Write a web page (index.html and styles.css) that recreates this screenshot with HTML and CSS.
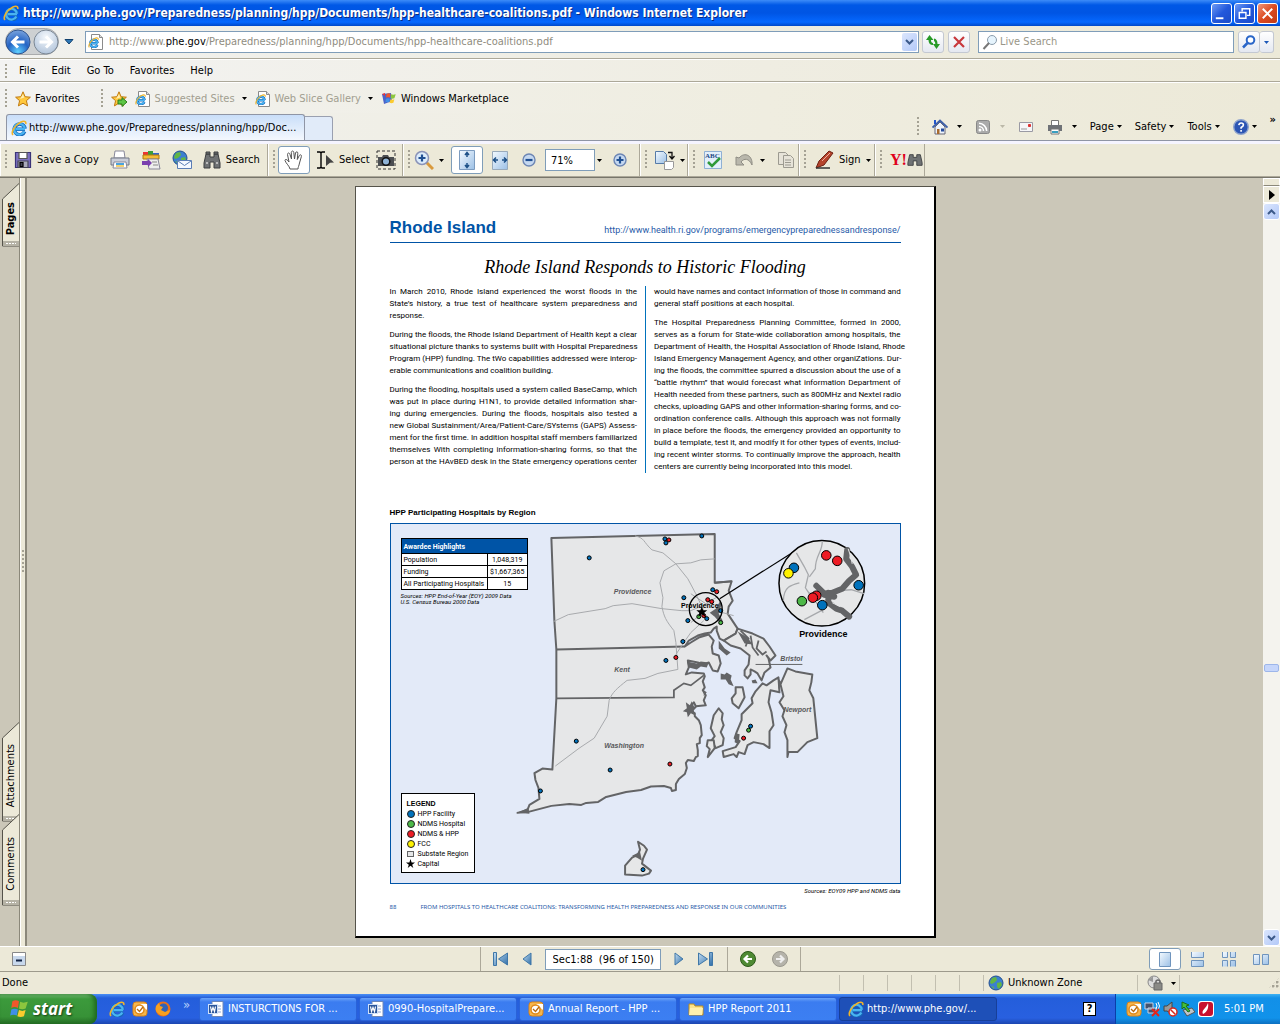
FILE: index.html
```
<!DOCTYPE html>
<html lang="en">
<head>
  <meta charset="UTF-8">
  <title>http://www.phe.gov/Preparedness/planning/hpp/Documents/hpp-healthcare-coalitions.pdf - Windows Internet Explorer</title>
  <link rel="stylesheet" href="styles.css">
</head>
<body>
  <!-- shared icons -->
  <svg class="defs" width="0" height="0" aria-hidden="true">
    <defs>
      <linearGradient id="blueGrad" x1="0" y1="0" x2="1" y2="1"><stop offset="0" stop-color="#f4faff"/><stop offset="1" stop-color="#9cc0e6"/></linearGradient>
      <linearGradient id="arrowGrad" x1="0" y1="0" x2="1" y2="1"><stop offset="0" stop-color="#c5def2"/><stop offset="1" stop-color="#2e6ea8"/></linearGradient>
      <radialGradient id="backGrad" cx=".5" cy=".9" r=".9"><stop offset="0" stop-color="#5fd0ff"/><stop offset=".5" stop-color="#2463c4"/><stop offset="1" stop-color="#7ba4dd"/></radialGradient>
      <radialGradient id="fwdGrad" cx=".5" cy=".3" r=".8"><stop offset="0" stop-color="#f4f8fc"/><stop offset="1" stop-color="#a9bdd6"/></radialGradient>
      <symbol id="ie" viewBox="0 0 16 16">
        <path d="M14 9.200H4.500M13.600 11.500A5.400 5.400 0 1 1 14 8.800" fill="none" stroke="#1668b8" stroke-width="3.600"/>
        <path d="M14 9.200H4.500M13.300 11.500A5.400 5.400 0 1 1 13.800 8.800" fill="none" stroke="#49b4f2" stroke-width="2.200"/>
        <path d="M2 15C-.5 12.500 4 5 9.500 2.200c3.500-1.700 6-1 5.200 1.800" fill="none" stroke="#f0b429" stroke-width="1.600"/>
      </symbol>
      <symbol id="iepage" viewBox="0 0 16 16">
        <path d="M3.500.5h8l3 3v12h-11z" fill="#fff" stroke="#8b8b8b"/><path d="M11.500.5v3h3" fill="#ddd" stroke="#8b8b8b"/>
        <use href="#ie" x="0" y="3" width="11" height="11"/>
      </symbol>
      <symbol id="star" viewBox="0 0 16 16"><path d="M8 .8l2.100 4.900 5.300.5-4 3.500 1.200 5.200L8 12.200l-4.600 2.700 1.200-5.200-4-3.500 5.300-.5z" fill="#ffc83d" stroke="#c07a10"/><path d="M8 3l1.300 3.600L5 8z" fill="#ffeeb0"/></symbol>
      <symbol id="down" viewBox="0 0 5 3"><path d="M0 0h5L2.500 3z"/></symbol>
      <symbol id="printer" viewBox="0 0 20 20">
        <path d="M5 1h9l1 7H4z" fill="#fff" stroke="#889"/><path d="M1 8h18v7H1z" fill="#c9cdd8" stroke="#737886"/>
        <path d="M4 12h12l1 6H3z" fill="#fff" stroke="#889"/><path d="M6 14h8" stroke="#4aa3df" stroke-width="2"/><path d="M6 16h8" stroke="#f0c040" stroke-width="1.500"/>
      </symbol>
      <symbol id="globe" viewBox="0 0 16 16"><circle cx="8" cy="8" r="7" fill="#3c7fd0" stroke="#234f8f"/><path d="M4 3l4-1 1 3-3 3-3 1-1-2zM9 8l4-1 1 3-3 4-2-2zM3 11l3 1v2z" fill="#62b545"/></symbol>
      <symbol id="outlook" viewBox="0 0 16 16"><rect x="1" y="1" width="14" height="14" rx="3" fill="#f6b64c" stroke="#d98218"/><path d="M8 3h7v6z" fill="#fff"/><circle cx="7.500" cy="8.500" r="4.500" fill="#fff" stroke="#e08a1c" stroke-width="1.500"/><path d="M5 8l2.500 2.500L11 6" fill="none" stroke="#b86a10" stroke-width="1.300"/></symbol>
      <symbol id="word" viewBox="0 0 16 16"><path d="M4 .5h11v15H4z" fill="#fff" stroke="#6d87b8"/><path d="M9 5h4M9 8h4M9 11h4" stroke="#8ba6d6"/><rect x=".5" y="3.500" width="9" height="9" fill="#2b569a" stroke="#cfe0f8"/><path d="M2.500 5.500l1 5 1.500-4 1.500 4 1-5" fill="none" stroke="#fff" stroke-width="1.200"/></symbol>
      <symbol id="flag" viewBox="0 0 20 20"><path d="M4 3c3-1.500 4-1 6 0L9 9C7 8 5 8 3 9z" fill="#f0572b"/><path d="M11 3.500c2 1 4 1 7 0L16 9.500c-2 1-4 1-6 0z" fill="#8cc63e"/><path d="M3 10.500c2-1.200 4-1 6 0L8 16c-2-1-4-1-6 0z" fill="#3f8fe8"/><path d="M10 11c2 1 4 1 6 0l-1.500 5.500c-2 1-4 1-6 0z" fill="#fbcb2e"/></symbol>
    </defs>
  </svg>

  <header class="titlebar">
    <svg class="i16"><use href="#ie"/></svg>
    <h1>http://www.phe.gov/Preparedness/planning/hpp/Documents/hpp-healthcare-coalitions.pdf - Windows Internet Explorer</h1>
    <div class="winbtns">
      <button aria-label="Minimize"><svg viewBox="0 0 20 20"><path d="M4 14h8v2H4z" fill="#fff"/></svg></button>
      <button aria-label="Restore"><svg viewBox="0 0 20 20" fill="none" stroke="#fff"><path d="M7.500 8V5h8v7h-3" stroke-width="1.500"/><path d="M4.500 9h7v6h-7z" stroke-width="1.500"/></svg></button>
      <button class="close" aria-label="Close"><svg viewBox="0 0 20 20"><path d="M5 5l10 10M15 5L5 15" stroke="#fff" stroke-width="2"/></svg></button>
    </div>
  </header>

  <div class="navrow">
    <button class="backfwd" aria-label="Back and forward">
      <svg viewBox="0 0 54 28"><rect x=".5" y=".5" width="53" height="26" rx="13" fill="#cdd0d2" stroke="#a9abad"/>
        <circle cx="13" cy="14" r="12" fill="url(#backGrad)" stroke="#31558f"/><path d="M19.500 14H8M13 8.500L7.500 14l5.500 5.500" fill="none" stroke="#fff" stroke-width="3"/>
        <circle cx="41" cy="14" r="12" fill="url(#fwdGrad)" stroke="#7b8794"/><path d="M34.500 14H46M41 8.500l5.500 5.500-5.500 5.500" fill="none" stroke="#fff" stroke-width="3"/></svg>
    </button>
    <button class="recent" aria-label="Recent pages"><svg width="10" height="6" viewBox="0 0 10 6"><path d="M1 .5h8L5 5z" fill="#2d78b8" stroke="#12416e"/></svg></button>
    <div class="address">
      <svg class="i16"><use href="#iepage"/></svg>
      <div class="url" role="textbox" aria-label="Address">http://www.<b>phe.gov</b>/Preparedness/planning/hpp/Documents/hpp-healthcare-coalitions.pdf</div>
      <button class="drop" aria-label="Show addresses"><svg width="9" height="6" viewBox="0 0 9 6"><path d="M1 1l3.500 3.500L8 1" fill="none" stroke="#3c5a8a" stroke-width="2"/></svg></button>
    </div>
    <button class="small" aria-label="Refresh"><svg class="i16" viewBox="0 0 16 16" fill="#279a27"><path d="M4.500 1L1 6h2.500q0 5 4.500 5V9Q6 9 6 6h2.500zM11.500 15L15 10h-2.500q0-5-3.500-5.500V7q1.300.5 1.300 3H8z"/></svg></button>
    <button class="small" aria-label="Stop"><svg class="i16" viewBox="0 0 16 16"><path d="M3 3l10 10M13 3L3 13" stroke="#c8383c" stroke-width="2.200"/></svg></button>
    <label class="search">
      <svg class="i16" viewBox="0 0 16 16"><circle cx="10" cy="6" r="4.500" fill="#e6f4fd" stroke="#8a9cab"/><path d="M7 9l-5.500 6" stroke="#777" stroke-width="2"/></svg>
      <input type="text" placeholder="Live Search" aria-label="Live Search">
    </label>
    <div class="go">
      <button aria-label="Search"><svg class="i16" viewBox="0 0 16 16"><circle cx="9.500" cy="6" r="3.800" fill="#fff" stroke="#2a66c8" stroke-width="2"/><path d="M6.500 9L2 13.500" stroke="#2a66c8" stroke-width="2.500"/></svg></button>
      <button class="godrop" aria-label="Search options"><svg width="5" height="3" fill="#1a57b8"><use href="#down"/></svg></button>
    </div>
  </div>

  <nav class="menubar">
    <i class="dots"></i>
    <button>File</button><button>Edit</button><button>Go To</button><button>Favorites</button><button>Help</button>
  </nav>

  <div class="favbar">
    <i class="dots"></i>
    <button class="favmain"><svg class="i16"><use href="#star"/></svg>Favorites</button>
    <i class="dots"></i>
    <button class="addfav" aria-label="Add to Favorites Bar"><svg class="i16" viewBox="0 0 16 16"><use href="#star"/><path d="M7 9h4V6.500l5 4.500-5 4.500V13H7z" fill="#5cc544" stroke="#2b7d1c"/></svg></button>
    <button class="dim"><svg class="i16"><use href="#iepage"/></svg>Suggested Sites<svg class="tri"><use href="#down"/></svg></button>
    <button class="dim"><svg class="i16"><use href="#iepage"/></svg>Web Slice Gallery<svg class="tri"><use href="#down"/></svg></button>
    <button><svg class="i16" viewBox="0 0 16 16"><path d="M1 3l9-1 1 8-8 3z" fill="#4b62c8"/><use href="#flag" x="3" y="1" width="13" height="13"/><path d="M1 3l3-1v3z" fill="#e33"/></svg>Windows Marketplace</button>
  </div>

  <div class="tabrow">
    <button class="tab"><svg class="i16"><use href="#ie"/></svg>http://www.phe.gov/Preparedness/planning/hpp/Doc...</button>
    <button class="newtab" aria-label="New Tab"></button>
    <div class="cmdbar">
      <i class="dots"></i>
      <button aria-label="Home"><svg class="i16" viewBox="0 0 16 16"><path d="M3 8v7h10V8L8 3z" fill="#eef3fa" stroke="#667"/><path d="M.5 8.500L8 1.500l7.500 7" fill="none" stroke="#3c5fa8" stroke-width="1.800"/><path d="M2 1h2v4H2z" fill="#25c"/><path d="M5 10h2.500v5H5z" fill="#a86a2c"/><path d="M9 9.500h3v3H9z" fill="#234a9c"/></svg><svg class="tri"><use href="#down"/></svg></button>
      <button class="dim" aria-label="Feeds"><svg class="i16" viewBox="0 0 16 16"><rect x="1.500" y="1.500" width="13" height="13" rx="2" fill="#aaa" stroke="#888"/><circle cx="5" cy="11" r="1.500" fill="#fff"/><path d="M4 7.500A4.500 4.500 0 0 1 8.500 12M4 4.300A8 8 0 0 1 11.700 12" fill="none" stroke="#fff" stroke-width="1.500"/></svg><svg class="tri pale"><use href="#down"/></svg></button>
      <button aria-label="Read Mail"><svg class="i16" viewBox="0 0 16 16"><path d="M1.500 3.500h13v9h-13z" fill="#f6f6f8" stroke="#9a9aa4"/><path d="M10.500 5.500h2v2h-2z" fill="#d33" stroke="#d33"/><path d="M3 10h6" stroke="#999"/></svg></button>
      <button aria-label="Print"><svg class="i16" viewBox="0 0 16 16"><path d="M4.500 1.500h7V7h-7z" fill="#fff" stroke="#777"/><path d="M1 6h14v6H1z" fill="#6f7277"/><path d="M4 10h8v5H4z" fill="#fff" stroke="#777"/><path d="M5 13h6" stroke="#3a9fc0" stroke-width="2"/></svg><svg class="tri"><use href="#down"/></svg></button>
      <button class="word">Page<svg class="tri"><use href="#down"/></svg></button>
      <button class="word">Safety<svg class="tri"><use href="#down"/></svg></button>
      <button class="word">Tools<svg class="tri"><use href="#down"/></svg></button>
      <button class="helpbtn" aria-label="Help"><svg class="i16" viewBox="0 0 16 16"><circle cx="8" cy="8" r="7.300" fill="#2c55b4" stroke="#8ea3cc" stroke-width="1.400"/><path d="M5.800 6.200q.3-2.200 2.300-2.200 2.300 0 2.300 2 0 1.200-2.300 2.500v1.200M8.100 11v1.700" fill="none" stroke="#fff" stroke-width="1.600"/></svg><svg class="tri"><use href="#down"/></svg></button>
      <button class="more" aria-label="More commands">»</button>
    </div>
  </div>

  <div class="pdfbar">
    <div class="group g-file">
      <i class="dots"></i>
      <button class="lead"><svg class="i18" viewBox="0 0 18 18"><path d="M1.500 1.500h15v15h-15z" fill="#7c70c0" stroke="#3b3478"/><path d="M5 1.500h8v6H5z" fill="#fff" stroke="#555"/><path d="M4 10h10v6.500H4z" fill="#aab" stroke="#445"/><path d="M6 11.500h3v4H6z" fill="#445"/></svg>Save a Copy</button>
      <button aria-label="Print"><svg class="i20"><use href="#printer"/></svg></button>
      <button aria-label="Organizer"><svg class="i20" viewBox="0 0 20 20"><path d="M2 2h5v3H2z" fill="#e33"/><path d="M7 1h5v4H7z" fill="#3a9d3a"/><path d="M12 3h6v3h-6z" fill="#36c"/><path d="M2 5h16v4H2z" fill="#f5bb35" stroke="#b27a10"/><path d="M6 9h11l2 10H8z" fill="#eee" stroke="#889"/><path d="M1 11h6V9l4 4-4 4v-2H1z" fill="#7a3fae"/><path d="M11 12h5M12 15h5" stroke="#888"/></svg></button>
      <button aria-label="Email"><svg class="i20" viewBox="0 0 20 20"><use href="#globe" width="16" height="16"/><path d="M5.500 10.500h14v8h-14z" fill="#f4f8ff" stroke="#5a7db5"/><path d="M6 11l6.500 4.500L19 11" fill="none" stroke="#5a7db5"/></svg></button>
      <button><svg class="i18" viewBox="0 0 18 18" fill="#6f7274" stroke="#3c3e40"><path d="M3 3h4v3h4V3h4l2 9v5h-6v-6H7v6H1v-5z"/><path d="M3 1h4v2H3zM11 1h4v2h-4z"/><path d="M3 12h2M13 12h2" stroke="#bbb" stroke-width="2"/></svg>Search</button>
    </div>
    <div class="group g-tools">
      <i class="dots"></i>
      <button class="on" aria-label="Hand tool"><svg class="i20" viewBox="0 0 20 20"><path d="M6 19c-.5-3-4-5.500-5-8.500 0-1.700 2-1.500 4 1.500L3.500 4.500c0-2 2-2 2.500 0L7.500 9 7.300 2.500c.2-2 2.400-2 2.500 0L10.500 9l1-6c.5-1.800 2.500-1.500 2.300.3L13.300 9.500l2-4c1-1.500 2.500-.5 2.100 1L15.500 13c-.5 3-1.500 4-1.500 6z" fill="#fff" stroke="#555"/></svg></button>
      <button><svg class="i18" viewBox="0 0 18 18"><path d="M1 1h3l1 1 1-1h3M5 2v14M1 17h3l1-1 1 1h3" fill="none" stroke="#000" stroke-width="1.400"/><path d="M10 4l8 7.500-4 .3L10 15z" fill="#444"/></svg>Select</button>
      <button class="cam" aria-label="Snapshot"><svg class="i20" viewBox="0 0 20 20"><path d="M1 1h18v18H1z" fill="none" stroke="#333" stroke-dasharray="3 2"/><path d="M2 7h4l1-2h5l1 2h5v9H2z" fill="#4b4e52"/><circle cx="10" cy="11.500" r="3.800" fill="#8fb3d6" stroke="#111" stroke-width="1.500"/></svg></button>
    </div>
    <div class="group g-zoom">
      <i class="dots"></i>
      <button aria-label="Zoom In tool"><svg class="i20" viewBox="0 0 20 20"><path d="M12 12l7 7" stroke="#d99a3c" stroke-width="3"/><circle cx="8" cy="8" r="6.500" fill="#dcecfb" stroke="#8a93b8" stroke-width="1.500"/><path d="M8 4.500v7M4.500 8h7" stroke="#1f4f92" stroke-width="2.200"/></svg><svg class="tri"><use href="#down"/></svg></button>
      <button class="on" aria-label="Fit page"><svg class="i20" viewBox="0 0 20 20"><path d="M2.500.5h15v19h-15z" fill="url(#blueGrad)" stroke="#7d9cc0"/><path d="M10 3v4M10 17v-4M8 5l2-2.500L12 5M8 15l2 2.500 2-2.500" fill="none" stroke="#1c4f86" stroke-width="1.500"/></svg></button>
      <button aria-label="Fit width"><svg class="i20" viewBox="0 0 20 20"><path d="M2.500 1.500h15v18h-15z" fill="url(#blueGrad)" stroke="#9ab"/><path d="M3 10h5M17 10h-5M6 7.500L3.500 10 6 12.500M14 7.500l2.500 2.500-2.500 2.500" fill="none" stroke="#1c4f86" stroke-width="1.500"/></svg></button>
      <button class="minus" aria-label="Zoom Out"><svg class="i14" viewBox="0 0 14 14"><circle cx="7" cy="7" r="6" fill="#c5d8f0" stroke="#6d86b4" stroke-width="1.400"/><path d="M3.500 7h7" stroke="#1f4f92" stroke-width="2.200"/></svg></button>
      <span class="zoomval"><input type="text" value="71%" aria-label="Zoom"><svg class="tri"><use href="#down"/></svg></span>
      <button aria-label="Zoom In"><svg class="i14" viewBox="0 0 14 14"><circle cx="7" cy="7" r="6" fill="#c5d8f0" stroke="#6d86b4" stroke-width="1.400"/><path d="M3.500 7h7M7 3.500v7" stroke="#1f4f92" stroke-width="2.200"/></svg></button>
    </div>
    <div class="group g-rot">
      <i class="dots"></i>
      <button aria-label="Rotate pages"><svg class="i20" viewBox="0 0 20 20"><path d="M.5 1.500h8l3 3v9H.5z" fill="url(#blueGrad)" stroke="#567ba8"/><path d="M9.500 11.500h9v6l-2 2h-7z" fill="#fff" stroke="#999"/><path d="M13 2.500h4V8M14.500 6l2.500 3 2.500-3" fill="none" stroke="#111" stroke-width="1.300"/></svg><svg class="tri"><use href="#down"/></svg></button>
    </div>
    <div class="group g-edit">
      <i class="dots"></i>
      <button aria-label="Spell check"><svg class="i20" viewBox="0 0 20 20"><path d="M1.500 1.500h17v17h-17z" fill="#e3effa" stroke="#8fb0d4"/><text x="2" y="8" class="abc">ABC</text><path d="M5 12l4 4 8-8" fill="none" stroke="#2f9a3a" stroke-width="2.500"/></svg></button>
      <button aria-label="Undo"><svg class="i20" viewBox="0 0 20 20"><path d="M1 7v8h8l-3-3c3-4 8-4 11 3 1-9-7-14-13-7z" fill="#b9b7ac" stroke="#8f8d84"/></svg><svg class="tri"><use href="#down"/></svg></button>
      <button aria-label="Copy"><svg class="i18" viewBox="0 0 18 18" fill="#e6e3d8" stroke="#9c9a90"><path d="M1.500 1.500h7l3 3v9h-10z"/><path d="M6.500 4.500h7l3 3v9h-10z"/><path d="M8 9h6M8 11.500h6M8 14h6"/></svg></button>
    </div>
    <div class="group g-sign">
      <i class="dots"></i>
      <button><svg class="i20" viewBox="0 0 20 20"><path d="M2 18L5 11 15 1l4 2-9 12z" fill="#b5442c" stroke="#6d2012"/><path d="M2 18h14" stroke="#333" stroke-width="1.500"/><path d="M8 11l8-8" stroke="#f0b0a0"/></svg>Sign<svg class="tri"><use href="#down"/></svg></button>
    </div>
    <div class="group g-yahoo">
      <i class="dots"></i>
      <button aria-label="Yahoo search"><span class="yahoo">Y!</span><svg class="i16" viewBox="0 0 18 18" fill="#6f7274" stroke="#3c3e40"><path d="M3 3h4v3h4V3h4l2 9v3h-6v-5H7v5H1v-3z"/></svg></button>
    </div>
  </div>

  <main class="viewer">
    <div class="sidetabs">
      <button class="active"><svg viewBox="0 0 17 64" preserveAspectRatio="none"><path d="M17 .5L.5 16v47H17" fill="#ece9d8" stroke="#55534a"/><path d="M1 58h16v5H1z" fill="#b5b2a5"/><path d="M4 60.500h10" stroke="#fff" stroke-dasharray="2 1"/></svg><span>Pages</span></button>
      <div class="spacer"></div>
      <button class="long"><svg viewBox="0 0 17 100" preserveAspectRatio="none"><path d="M17 .5L.5 16v83H17" fill="#ece9d8" stroke="#55534a"/><path d="M1 94h16v5H1z" fill="#b5b2a5"/><path d="M4 96.500h10" stroke="#fff" stroke-dasharray="2 1"/></svg><span>Attachments</span></button>
      <button class="mid"><svg viewBox="0 0 17 92" preserveAspectRatio="none"><path d="M17 .5L.5 16v75H17" fill="#ece9d8" stroke="#55534a"/><path d="M1 86h16v5H1z" fill="#b5b2a5"/><path d="M4 88.500h10" stroke="#fff" stroke-dasharray="2 1"/></svg><span>Comments</span></button>
    </div>
    <div class="splitter"><i class="dots"></i></div>

    <div class="canvas">
      <article class="sheet">
        <div class="sheethead">
          <h2>Rhode Island</h2>
          <a href="http://www.health.ri.gov/programs/emergencypreparednessandresponse/">http://www.health.ri.gov/programs/emergencypreparednessandresponse/</a>
        </div>
        <h3 class="script">Rhode Island Responds to Historic Flooding</h3>
        <div class="columns">
          <div class="col">
            <p><span>In March 2010, Rhode Island experienced the worst floods in the</span> <span>State’s history, a true test of healthcare system preparedness and</span> <span>response.</span></p>
            <p><span>During the floods, the Rhode Island Department of Health kept a clear</span> <span>situational picture thanks to systems built with Hospital Preparedness</span> <span>Program (HPP) funding. The tWo capabilities addressed were interop-</span> <span>erable communications and coalition building.</span></p>
            <p class="full"><span>During the flooding, hospitals used a system called BaseCamp, which</span> <span>was put in place during H1N1, to provide detailed information shar-</span> <span>ing during emergencies. During the floods, hospitals also tested a</span> <span>new Global Sustainment/Area/Patient-Care/SYstems (GAPS) Assess-</span> <span>ment for the first time. In addition hospital staff members familiarized</span> <span>themselves With completing information-sharing forms, so that the</span> <span>person at the HAvBED desk in the State emergency operations center</span></p>
          </div>
          <div class="col">
            <p><span>would have names and contact information of those in command and</span> <span>general staff positions at each hospital.</span></p>
            <p><span>The Hospital Preparedness Planning Committee, formed in 2000,</span> <span>serves as a forum for State-wide collaboration among hospitals, the</span> <span>Department of Health, the Hospital Association of Rhode Island, Rhode</span> <span>Island Emergency Management Agency, and other organiZations. Dur-</span> <span>ing the floods, the committee spurred a discussion about the use of a</span> <span>“battle rhythm” that would forecast what information Department of</span> <span>Health needed from these partners, such as 800MHz and Nextel radio</span> <span>checks, uploading GAPS and other information-sharing forms, and co-</span> <span>ordination conference calls. Although this approach was not formally</span> <span>in place before the floods, the emergency provided an opportunity to</span> <span>build a template, test it, and modify it for other types of events, includ-</span> <span>ing recent winter storms. To continually improve the approach, health</span> <span>centers are currently being incorporated into this model.</span></p>
          </div>
        </div>

        <h4>HPP Participating Hospitals by Region</h4>
        <div class="map">
          <svg class="mapart" viewBox="389 523 511 360">
            <g class="land">
              <path d="M550 537L714 533V582L731 580.500 728 590 732 600 728 606 727 613 737 628 735 633 723 640 719 638 716 630 716 626 713 628 710 632 704 633 697 635 688 640 684 646 690 642 698 637 708 634 713 640 711 646 712 653 718 655 720 663 717 671 712 670 708 662 703 664 697 662 687 660 688 667 685 674 691 672 703 673 704 676 702 681 704 687 702 690 705 695 703 700 705 705 695 706 693 702 688 709 694 713 694 716 698 720 700 725 701 735 699 738 699 743 696 744 697 750 697 756 695 757 693 761 687 760 685 763 686 768 684 774 678 779 675 784 675 790 671 791 670 788 663 786 650 786.500 640 790 625 792 605 797 597 802 585 803 580 805 568 804 550 806 527 812 516 813 526 810 528 805 538 799 537 788 534 780 533 773 541 768.500 551 769.500 555 698 555 649 553 620Z"/>
              <path d="M737 628L752 633 763 638 769 646 775 655 770 660 766 655 768 658 770 667 764 672 761 680 757 673 754 671 750 669 750 674 747 678 744 675 744 670 748 664 749 655 740 648 730 645 723 640 735 633Z"/>
              <path d="M735 687L742 687 744 697 738 708 732 703 731 698 735 693Z"/>
              <path d="M718 708L722 713 721 719 723 725 720 732 723 738 722 745 715 748 711 740 714 736 710 728 713 715Z"/>
              <path d="M707 740L713 740 714 748 707 757 709 749 706 746Z"/>
              <path d="M778 677L779 692 770 690 768 702 771 712 773 725 769 731 769 748 763 744 753 742 747 745 744 754 738 752 736 757 733 754 723 757 722 751 735 747 739 741 734 738 736 732 741 720 741 714 752 703 751 698 755 691 762 683 766 685 773 680Z"/>
              <path d="M787 668L795 671 812 674 811 682 809 690 813 698 817 738 807 742 797 752 788 752 787 757V740L784 732 786 725 782 716 784 710 779 702 783 696 780 684Z"/>
              <path d="M637 842L643 846 646 850 642 859 641 864 650 871 648 874 641 876 624 875 624 866 631 858 637 855 639 850Z"/>
            </g>
            <g class="borders">
              <path d="M555 649L684 646M555 698L673 697V690L683 683 690 685 703 675M714 582L731 580.500"/>
              <path d="M740 630l8 8-3 8M750 635l2 12 6 8M758 640l-2 8 6 6 4-3" />
            </g>
            <path class="hair" d="M755 664H802"/>
            <path class="shore" d="M686 661l10 2 4-2 8 1-2 5-6-1-4 3-8-2zM718 640l6 8 6 4-4 3-8-7zM737 631l10 6 5 7-8-1zM720 673l4 1 2-2 5 3-1 4 3 7-5-2-3-5-5 0zM685 702l4 3 2-4 2 5 3 1-3 3 1 5-4-2-3 4-1-5-4-1 4-3zM735 733l4 1-1 10-4-2zM778 678l3 4-3 7zM751 680l4-1 2 4-5 0zM703 690l3 2-3 4zM631 856l8-4 2 9-5-3zM516 813l11-5 1 6z"/>
            <g class="roads">
              <path d="M552 621l15-7 37-6 8-3 19-2 30 5 20 2h9l19-8M722 612l11 3M634 535c10 2 8 6 17 14l11 3 13 11 12 15 8 15 8 17M675 563l15-1 10-3 14-1M675 563l-12 7-4 12 3 15-1 9c2 10 4 14 12 24l2 12 2 27-20 4-13 5-18 2c-10 8-15 12-18 20l-2 16-13 22-15 10-24 18M703 620l-13 12-7 10-8 12M690 593l15 10 12-7M690 622l12-10"/>
            </g>
            <path class="shore" d="M709 612l6-4 4-7 2 2-3 10 4 7-3 2-5-6z"/>
            <g class="dots8">
              <circle cx="588" cy="557" r="2"/><circle cx="664" cy="538" r="2"/><circle cx="665" cy="542" r="2"/><circle cx="701" cy="535" r="2"/><circle cx="683" cy="597" r="2"/><circle cx="712" cy="589" r="2"/><circle cx="687" cy="620" r="2"/><circle cx="720" cy="610" r="2"/><circle cx="682" cy="641" r="2"/><circle cx="665" cy="660" r="2"/><circle cx="706" cy="618" r="2"/><circle cx="750" cy="726" r="2"/><circle cx="575" cy="741" r="2"/><circle cx="609" cy="770" r="2"/><circle cx="539" cy="791" r="2"/><circle cx="642" cy="870" r="2"/>
            </g>
            <g class="dots8 red"><circle cx="668" cy="539" r="2"/><circle cx="716" cy="591" r="2"/><circle cx="707" cy="599" r="2"/><circle cx="711" cy="601" r="2"/><circle cx="703" cy="615" r="2"/><circle cx="675" cy="657" r="2"/><circle cx="743" cy="738" r="2"/><circle cx="669" cy="764" r="2"/></g>
            <g class="dots8 green"><circle cx="698" cy="616" r="2"/><circle cx="720" cy="622" r="2"/><circle cx="748" cy="730" r="2"/></g>
            <path d="M701 606l1.500 3.500h4l-3 2.500 1 4-3.500-2.500-3.500 2.500 1-4-3-2.500h4z"/>
            <circle class="ring" cx="705" cy="608.500" r="16.500"/>
            <path class="lead" d="M719 598L793 551"/>
            <circle class="lens" cx="821.500" cy="582.500" r="43"/>
            <g class="roads big"><path d="M796 552l8 14 4 8-3 13 4 6 12-2 30-2 13 4M822 540c0 12-7 14-7 28l-6 8M783 600c0-14 8-16 16-18M804 619l17-9M809 592l14 20"/></g>
            <path class="river" d="M847 549l-1 9 6 8 4 8-7 6-7 8-10 4-8 1-8-8M824 594l10 2M828 592v10l8 6 6 2 7 6"/>
            <path class="hair2" d="M848 548l3 9 1 6M832 602l8 4"/>
            <g class="bigdots">
              <g class="blue"><circle cx="793.500" cy="567" r="4.800"/><circle cx="858.500" cy="584.500" r="4.800"/><circle cx="822" cy="604.500" r="4.800"/></g>
              <g class="red"><circle cx="826" cy="554.500" r="4.800"/><circle cx="837" cy="560" r="4.800"/><circle cx="816" cy="595" r="4.800"/><circle cx="812.500" cy="597" r="4.800"/></g>
              <circle class="yellow" cx="788" cy="572.500" r="4.800"/><circle class="green" cx="801.500" cy="600.500" r="4.800"/>
            </g>
            <g class="region"><text x="631.500" y="593">Providence</text><text x="621" y="672">Kent</text><text x="623" y="748">Washington</text><text x="791" y="661">Bristol</text><text x="797" y="712">Newport</text></g>
            <g class="city"><text class="tiny" x="699" y="607">Providence</text><text x="823" y="636">Providence</text></g>
          </svg>

          <div class="awardee">
            <table>
              <thead><tr><th colspan="2">Awardee Highlights</th></tr></thead>
              <tbody>
                <tr><td>Population</td><td class="num">1,048,319</td></tr>
                <tr><td>Funding</td><td class="num">$1,667,365</td></tr>
                <tr><td>All Participating Hospitals</td><td class="num">15</td></tr>
              </tbody>
            </table>
            <p class="src">Sources: HPP End-of-Year (EOY) 2009 Data<br>U.S. Census Bureau 2000 Data</p>
          </div>

          <div class="legend">
            <h5>LEGEND</h5>
            <ul>
              <li><i class="pin blue"></i>HPP Facility</li>
              <li><i class="pin green"></i>NDMS Hospital</li>
              <li><i class="pin red"></i>NDMS &amp; HPP</li>
              <li><i class="pin yellow"></i>FCC</li>
              <li><i class="pin box"></i>Substate Region</li>
              <li><svg width="9" height="9" viewBox="0 0 16 16"><path d="M8 0l2 6h6l-5 4 2 6-5-4-5 4 2-6-5-4h6z"/></svg>Capital</li>
            </ul>
          </div>
        </div>
        <p class="mapsrc">Sources: EOY09 HPP and NDMS data</p>
        <footer class="sheetfoot"><span>88</span><span>FROM HOSPITALS TO HEALTHCARE COALITIONS: TRANSFORMING HEALTH PREPAREDNESS AND RESPONSE IN OUR COMMUNITIES</span></footer>
      </article>
    </div>

    <div class="scroll">
      <i class="splitbox"></i>
      <button class="play" aria-label="Document options"><svg width="6" height="10" viewBox="0 0 6 10"><path d="M0 0l6 5-6 5z"/></svg></button>
      <button aria-label="Scroll up"><svg width="9" height="6" viewBox="0 0 9 6"><path d="M1 5l3.500-3.500L8 5" fill="none" stroke="#3c5a8a" stroke-width="2"/></svg></button>
      <div class="track"><i class="thumb"></i></div>
      <button aria-label="Scroll down"><svg width="9" height="6" viewBox="0 0 9 6"><path d="M1 1l3.500 3.500L8 1" fill="none" stroke="#3c5a8a" stroke-width="2"/></svg></button>
    </div>
  </main>

  <div class="pagebar">
    <button class="hide" aria-label="Hide toolbars"><svg class="i14" viewBox="0 0 14 14"><path d="M.5.5h13v13H.5z" fill="#fff" stroke="#888"/><path d="M1 4h12v9H1z" fill="#c8d8ec"/><path d="M4 8.500h6" stroke="#124" stroke-width="2"/></svg></button>
    <div class="pager">
      <div class="steps">
        <button aria-label="First page"><svg width="16" height="14" viewBox="0 0 16 14" fill="url(#arrowGrad)" stroke="#3f77a8"><path d="M.5.5h3v13h-3zM14.500 1v12l-9-6z"/></svg></button>
        <button aria-label="Previous page"><svg width="10" height="14" viewBox="0 0 10 14"><path d="M9 1v12L1 7z" fill="url(#arrowGrad)" stroke="#3f77a8"/></svg></button>
        <input type="text" value="Sec1:88  (96 of 150)" aria-label="Page">
        <button aria-label="Next page"><svg width="10" height="14" viewBox="0 0 10 14"><path d="M1 1v12l8-6z" fill="url(#arrowGrad)" stroke="#3f77a8"/></svg></button>
        <button aria-label="Last page"><svg width="16" height="14" viewBox="0 0 16 14" fill="url(#arrowGrad)" stroke="#3f77a8"><path d="M12.500.5h3v13h-3zM1.500 1v12l9-6z"/></svg></button>
      </div>
      <div class="views">
        <button aria-label="Previous view"><svg class="i16" viewBox="0 0 16 16"><circle cx="8" cy="8" r="7.500" fill="#4f8a33" stroke="#2c5a1a"/><path d="M12 8H5M8 4.500L4.500 8 8 11.500" fill="none" stroke="#fff" stroke-width="2.200"/></svg></button>
        <button aria-label="Next view"><svg class="i16" viewBox="0 0 16 16"><circle cx="8" cy="8" r="7.500" fill="#b5b3aa" stroke="#9a988e"/><path d="M4 8h7M8 4.500l3.500 3.500L8 11.500" fill="none" stroke="#eee" stroke-width="2.200"/></svg></button>
      </div>
    </div>
    <div class="layouts">
      <button class="on" aria-label="Single page"><svg class="i16" viewBox="0 0 16 16"><path d="M2.500 1.500h11v14h-11z" fill="url(#blueGrad)" stroke="#6f94bd"/></svg></button>
      <button aria-label="Continuous"><svg class="i16" viewBox="0 0 16 16" fill="url(#blueGrad)" stroke="#6f94bd"><path d="M2.500 1v5.500h12V1M2.500 15.500v-6h12v6z"/></svg></button>
      <button aria-label="Continuous facing"><svg class="i16" viewBox="0 0 16 16" fill="url(#blueGrad)" stroke="#6f94bd"><path d="M1.500 1v5.500h5V1M9.500 1v5.500h5V1M1.500 15.500v-6h5v6M9.500 15.500v-6h5v6"/></svg></button>
      <button aria-label="Facing"><svg class="i16" viewBox="0 0 16 16" fill="url(#blueGrad)" stroke="#6f94bd"><path d="M.5 3.500h6v10h-6zM9.500 3.500h6v10h-6z"/></svg></button>
    </div>
  </div>

  <div class="statusbar">
    <span class="done">Done</span>
    <i class="cell"></i><i class="cell"></i><i class="cell"></i><i class="cell"></i><i class="cell"></i><i class="cell"></i>
    <span class="zone"><svg class="i16"><use href="#globe"/></svg>Unknown Zone</span>
    <span class="lock"><svg class="i16" viewBox="0 0 16 16"><circle cx="7" cy="7" r="6" fill="#ddd" stroke="#888"/><path d="M1 5l5 2V1" fill="#999"/><path d="M7 8h8v7H7z" fill="#8a8a86" stroke="#666"/><path d="M9 8V6q2-2 4 0v2" fill="none" stroke="#666" stroke-width="1.500"/></svg><svg class="tri"><use href="#down"/></svg></span>
    <span class="grip"></span>
  </div>

  <footer class="taskbar">
    <button class="start"><svg viewBox="0 0 20 20"><use href="#flag"/></svg>start</button>
    <div class="quick">
      <svg class="i16"><use href="#ie"/></svg>
      <svg class="i16"><use href="#outlook"/></svg>
      <svg class="i16" viewBox="0 0 16 16"><circle cx="8" cy="8" r="7.500" fill="#e8701a"/><circle cx="8.500" cy="7" r="4.500" fill="#2f62b8"/><path d="M1 5l3-3 1 3 3 1-2 3 4 2 5-2c-1 6-7 7-11 4S.5 8 1 5z" fill="#f7a01f"/></svg>
      <button class="chev" aria-label="More">»</button>
    </div>
    <div class="tasks">
      <button><svg class="i16"><use href="#word"/></svg>INSTURCTIONS FOR ...</button>
      <button><svg class="i16"><use href="#word"/></svg>0990-HospitalPrepare...</button>
      <button><svg class="i16"><use href="#outlook"/></svg>Annual Report - HPP ...</button>
      <button><svg class="i16" viewBox="0 0 16 16"><path d="M1 3h5l1 2h8v9H1z" fill="#fbe38a" stroke="#b98a1e"/><path d="M2 7h13l-1 7H1z" fill="#fff0ad"/></svg>HPP Report 2011</button>
      <button class="current"><svg class="i16"><use href="#ie"/></svg>http://www.phe.gov/...</button>
    </div>
    <button class="ask" aria-label="Language bar help">?</button>
    <div class="tray">
      <svg class="i16"><use href="#outlook"/></svg>
      <svg class="i16" viewBox="0 0 16 16"><path d="M1 2h8v6H1zM4 7h8v5H4z" fill="#44536e" stroke="#c6d2e6"/><path d="M12 2q2 3 0 6M14 1q3 4 0 8" fill="none" stroke="#fff"/><path d="M8 8l7 7M15 8l-7 7" stroke="#e3241b" stroke-width="2"/></svg>
      <svg class="i16" viewBox="0 0 16 16"><path d="M2 5h3l5-4v12L5 10H2z" fill="#999" stroke="#444"/><circle cx="11" cy="11" r="4" fill="#fff" stroke="#d6281e" stroke-width="1.500"/><path d="M8.500 8.500l5 5" stroke="#d6281e" stroke-width="1.500"/></svg>
      <svg class="i16" viewBox="0 0 16 16"><path d="M3 9l9-2 3 4-8 4z" fill="#bfc5cc" stroke="#555"/><path d="M2 1l7 3-3 1 4 5-2 1-4-5-2 2z" fill="#45c13b" stroke="#1c6d18"/></svg>
      <svg class="i16" viewBox="0 0 16 16"><rect width="16" height="16" rx="3" fill="#fff"/><rect x="1" y="1" width="14" height="14" rx="3" fill="#c8102e"/><path d="M5 13c-2-4 3-5 5-11 1 5-1 9-5 11z" fill="#fff"/></svg>
      <time>5:01 PM</time>
    </div>
  </footer>
</body>
</html>
```
FILE: styles.css
```
* {
  box-sizing: border-box;
}

body {
  margin: 0;
  height: 100vh;
  display: flex;
  flex-direction: column;
  overflow: hidden;
  background: #ece9d8;
  color: #000;
  font: 11px/14px "DejaVu Sans Condensed", "DejaVu Sans", sans-serif;
}

button, input {
  font: inherit;
  color: inherit;
}

button {
  display: flex;
  align-items: center;
  gap: 4px;
  padding: 0;
  border: 0;
  background: none;
  white-space: nowrap;
}

h1, h2, h3, h4, h5, p, ul {
  margin: 0;
  padding: 0;
}

svg {
  display: block;
  flex: none;
}

.defs { position: absolute; }
.i14 { width: 14px; height: 14px; }
.i16 { width: 16px; height: 16px; }
.i18 { width: 18px; height: 18px; }
.i20 { width: 20px; height: 20px; }
.tri { width: 5px; height: 3px; fill: #000; }
.tri.pale { fill: #bbb8a8; }

/* dotted grips */
.dots {
  flex: none;
  width: 2px;
  height: 16px;
  background: repeating-linear-gradient(#a5a294 0 2px, transparent 2px 4px);
}

/* title bar */
.titlebar {
  flex: none;
  height: 26px;
  display: flex;
  align-items: center;
  gap: 4px;
  padding: 0 2px 0 3px;
  background: linear-gradient(#3d8cf8, #0058e6 5px, #0055e4 50%, #0568ff 85%, #0048c8);
}

.titlebar h1 {
  flex: 1;
  color: #fff;
  font: bold 12px/16px "DejaVu Sans Condensed", "DejaVu Sans", sans-serif;
  text-shadow: 1px 1px 0 #0a2a80;
  white-space: nowrap;
  overflow: hidden;
}

.winbtns { display: flex; gap: 2px; }

.winbtns button {
  width: 21px;
  height: 21px;
  border: 1px solid #fff;
  border-radius: 3px;
  background: linear-gradient(135deg, #6f9bf5, #2258dc 50%, #1b4bc8);
}

.winbtns .close { background: linear-gradient(135deg, #f0967a, #dc4a20 50%, #c03a14); }

/* address row */
.navrow {
  flex: none;
  height: 33px;
  display: flex;
  align-items: center;
  gap: 3px;
  padding: 0 6px 0 5px;
  background: linear-gradient(90deg, #f1f1ee, #ece9d8);
  border-bottom: 1px solid #aca899;
}

.backfwd svg { width: 54px; height: 28px; }
.recent { width: 14px; justify-content: center; }

.address, .search {
  display: flex;
  align-items: center;
  height: 22px;
  border: 1px solid #7f9db9;
  background: #fff;
}

.address {
  flex: 1;
  gap: 5px;
  padding-left: 2px;
  margin-left: 6px;
}

.url { flex: 1; color: #8f8c80; }
.url b { color: #000; font-weight: normal; }

.drop {
  width: 15px;
  height: 18px;
  margin-right: 1px;
  justify-content: center;
  background: linear-gradient(135deg, #dbe6fd, #b3c9f8);
  border-radius: 2px;
}

.small, .go button {
  width: 22px;
  height: 22px;
  justify-content: center;
  background: linear-gradient(#fff, #e4e8f1);
  border: 1px solid #c3c8d2;
  border-radius: 3px;
}

.small + .small { margin-left: 1px; }

.search {
  width: 256px;
  margin-left: 5px;
  padding-left: 3px;
  gap: 2px;
}

.search input {
  flex: 1;
  min-width: 0;
  border: 0;
  padding: 0;
  background: none;
}

.search input::placeholder { color: #999688; }

.go { display: flex; margin-left: 1px; }
.go .godrop { width: 14px; border-left: 0; }

/* menu */
.menubar {
  flex: none;
  height: 23px;
  display: flex;
  align-items: center;
  padding-left: 5px;
  border-top: 1px solid #fff;
  border-bottom: 1px solid #aca899;
  background: linear-gradient(90deg, #f3f3f2, #efede2 60%, #ece9d8);
}

.menubar .dots { margin-right: 4px; height: 14px; }
.menubar button { padding: 0 8px; }

/* favorites */
.favbar {
  flex: none;
  height: 31px;
  display: flex;
  align-items: center;
  gap: 8px;
  padding: 1px 5px 0;
  border-top: 1px solid #fff;
  background: linear-gradient(90deg, #f2f2f0, #efede0 60%, #ece9d8);
}

.favbar .dots { height: 20px; }
.favmain { margin-right: 13px; }
.favbar .dim { color: #a19e90; }
.favbar .tri { margin-left: 3px; }

/* tabs */
.tabrow {
  flex: none;
  height: 28px;
  display: flex;
  align-items: flex-end;
  padding-left: 6px;
  border-bottom: 1px solid #8f95a5;
  background: linear-gradient(90deg, #f1f1ee, #efede0 60%, #ece9d8);
}

.tab {
  width: 299px;
  height: 26px;
  padding: 0 4px;
  gap: 2px;
  border: 1px solid #8f95a5;
  border-bottom: 0;
  border-radius: 3px 3px 0 0;
  background: linear-gradient(#c9def9, #f4f8fe);
}

.newtab {
  width: 28px;
  height: 24px;
  border: 1px solid #9aa0b0;
  border-left: 0;
  border-bottom: 0;
  border-radius: 0 3px 0 0;
  background: #e1ebf9;
}

.cmdbar {
  margin-left: auto;
  height: 27px;
  display: flex;
  align-items: center;
  gap: 13px;
  padding-right: 4px;
}

.cmdbar .dots { height: 20px; }
.cmdbar button { gap: 9px; }
.cmdbar .word, .cmdbar .helpbtn { gap: 3px; }
.cmdbar .more { align-self: flex-start; font-weight: bold; }

/* acrobat toolbar */
.pdfbar {
  flex: none;
  height: 36px;
  display: flex;
  border-top: 3px solid #f5f4ff;
  border-bottom: 1px solid #aca899;
}

.group {
  display: flex;
  align-items: center;
  gap: 12px;
  padding-left: 4px;
  border-left: 1px solid #fff;
  border-right: 1px solid #aca899;
}

.group .dots { margin-right: -4px; height: 20px; }
.g-file { width: 268px; gap: 11px; }
.g-tools { width: 135px; gap: 6px; }
.g-zoom { width: 237px; gap: 7px; }
.g-rot { width: 48px; }
.g-edit { width: 111px; }
.g-sign { width: 76px; }
.g-yahoo { width: 50px; }
.g-tools .dots, .g-zoom .dots { margin-right: -3px; }
.group button { gap: 5px; }

.on, .group .on {
  width: 32px;
  height: 28px;
  justify-content: center;
  border: 1px solid #7f9db9;
  border-radius: 3px;
  background: #fff;
}

.g-zoom .minus { margin: 0 2px 0 5px; }

.zoomval {
  display: flex;
  align-items: center;
  gap: 2px;
}

.zoomval input {
  width: 50px;
  height: 22px;
  padding: 0 5px;
  border: 1px solid #7f9db9;
}

.zoomval + button { margin-left: 4px; }

.abc {
  font: bold 7px "Liberation Serif", serif;
  fill: #234a86;
}

.g-yahoo button { gap: 0; }

.yahoo {
  color: #e0001b;
  font: bold 16px/18px "Liberation Serif", serif;
}

/* viewer */
.viewer {
  flex: 1;
  min-height: 0;
  display: flex;
  border-top: 1px solid #77756a;
  background: #cbc7b8;
}

.sidetabs {
  width: 20px;
  display: flex;
  flex-direction: column;
  padding: 5px 0 40px 2px;
  border-right: 1px solid #8b887a;
}

.spacer { flex: 1; }

.sidetabs button {
  position: relative;
  width: 17px;
  height: 64px;
  justify-content: center;
  padding-top: 8px;
}

.sidetabs .long { height: 100px; }
.sidetabs .mid { height: 92px; margin-top: -8px; }
.sidetabs .active { font-weight: bold; }

.sidetabs svg {
  position: absolute;
  inset: 0;
  width: 100%;
  height: 100%;
}

.sidetabs span {
  position: relative;
  writing-mode: vertical-rl;
  transform: rotate(180deg);
}

.splitter {
  width: 7px;
  display: flex;
  align-items: center;
  justify-content: center;
  background: #ece9d8;
  border-left: 1px solid #fff;
  border-right: 2px solid #8b887a;
}

.splitter .dots { height: 24px; }

.canvas {
  flex: 1;
  min-width: 0;
  display: flex;
  justify-content: center;
  padding: 8px 0;
  overflow: hidden;
}

/* document page */
.sheet {
  width: 581px;
  flex: none;
  padding: 30px 33px 0 34px;
  background: #fff;
  border: 1px solid #55534a;
  border-right: 2px solid #000;
  border-bottom: 2px solid #000;
  font: 8px/12px Roboto, "Liberation Sans", sans-serif;
}

.sheethead {
  display: flex;
  justify-content: space-between;
  align-items: baseline;
  padding-bottom: 3px;
  border-bottom: 1px solid #0054a6;
  color: #0054a6;
}

.sheethead h2 {
  font: bold 17px/22px "Liberation Sans", sans-serif;
}

.sheethead a {
  color: #1f5aa8;
  font-size: 9px;
  text-decoration: none;
}

.script {
  padding: 12px 0 7px;
  text-align: center;
  font: italic 18px/24px "Liberation Serif", serif;
}

.columns {
  display: grid;
  grid-template-columns: repeat(2, minmax(0, 1fr));
}

.col { padding-right: 8px; }

.col + .col {
  padding: 0 0 0 8px;
  border-left: 1px solid #0072bc;
}

.col p + p { margin-top: 7px; }

.col span {
  display: block;
  white-space: nowrap;
  text-align-last: justify;
}

.col p:not(.full) span:last-child { text-align-last: left; }

.sheet h4 {
  margin-top: 34px;
  padding-bottom: 4px;
  font: bold 8px/12px "Liberation Sans", sans-serif;
}

.map {
  position: relative;
  border: 1px solid #0054a6;
  background: #e3eaf8;
}

.mapart { width: 100%; height: auto; }

.land { fill: #e6e7e8; stroke: #636466; stroke-width: 2; stroke-linejoin: round; }
.borders { fill: none; stroke: #636466; stroke-width: 1.800; }
.hair { stroke: #636466; stroke-width: 1; }
.hair2 { fill: none; stroke: #e6e7e8; stroke-width: 1; }
.roads { fill: none; stroke: #a7a9ac; stroke-width: 1; }
.roads.big { stroke-width: 1.300; }
.shore { fill: #636466; }
.river { fill: none; stroke: #636466; stroke-width: 6; stroke-linejoin: round; stroke-linecap: round; }
.dots8 { fill: #0072bc; stroke: #000; stroke-width: 1; }
.dots8.red { fill: #ed1c24; }
.dots8.green { fill: #4db848; }
.ring { fill: none; stroke: #000; stroke-width: 1.300; }
.lead { stroke: #000; stroke-width: 1.200; }
.lens { fill: #e6e7e8; stroke: #000; stroke-width: 1.500; }
.bigdots { stroke: #000; stroke-width: 1; }
.bigdots .blue { fill: #0072bc; }
.bigdots .red { fill: #ed1c24; }
.bigdots .yellow { fill: #fff200; }
.bigdots .green { fill: #4db848; }

.region {
  fill: #58595b;
  font: italic bold 7px "Liberation Sans", sans-serif;
  text-anchor: middle;
}

.city {
  font: bold 9px "Liberation Sans", sans-serif;
  text-anchor: middle;
}

.city .tiny { font-size: 7px; }

.awardee {
  position: absolute;
  top: 14px;
  left: 10px;
}

.awardee table {
  width: 127px;
  border-collapse: collapse;
  background: #fff;
  font: 7px/10px Roboto, sans-serif;
}

.awardee th, .awardee td {
  padding: 1px 2px 0;
  border: 1px solid #000;
  white-space: nowrap;
  text-align: left;
}

.awardee th {
  padding: 3px 2px 1px;
  background: #0054a6;
  color: #fff;
}

.awardee .num { text-align: center; }

.src {
  padding-top: 3px;
  font: italic 6px/6px Roboto, sans-serif;
}

.legend {
  position: absolute;
  left: 10px;
  bottom: 10px;
  width: 74px;
  padding: 5px 5px 3px;
  border: 1px solid #000;
  background: #fff;
  font: 7px/10px Roboto, sans-serif;
}

.legend h5 {
  font: bold 7px/10px "Liberation Sans", sans-serif;
}

.legend ul { list-style: none; }

.legend li {
  display: flex;
  align-items: center;
  gap: 3px;
  white-space: nowrap;
}

.legend svg { margin-left: -1px; }

.pin {
  width: 8px;
  height: 8px;
  border: 1px solid #222;
  border-radius: 50%;
}

.pin.blue { background: #0072bc; }
.pin.green { background: #4db848; }
.pin.red { background: #ed1c24; }
.pin.yellow { background: #fff200; }

.pin.box {
  width: 7px;
  height: 6px;
  margin-right: 1px;
  border-color: #636466;
  border-radius: 0;
  background: #e6e7e8;
}

.mapsrc {
  text-align: right;
  font: italic 6px/14px Roboto, sans-serif;
}

.sheetfoot {
  display: flex;
  gap: 24px;
  padding-top: 4px;
  color: #1f5aa8;
  font: 6px/10px "Noto Sans", sans-serif;
}

/* scroll bar */
.scroll {
  width: 17px;
  display: flex;
  flex-direction: column;
  background: #f4f3ee;
}

.splitbox {
  height: 8px;
  border: 1px solid #fff;
  border-bottom-color: #8b887a;
  background: #ece9d8;
}

.scroll button {
  height: 17px;
  justify-content: center;
  border: 1px solid #fff;
  border-radius: 3px;
  background: linear-gradient(135deg, #dbe6fd, #b3c9f8);
}

.scroll .play {
  border-radius: 0;
  background: #ece9d8;
}

.track {
  flex: 1;
  padding-top: 444px;
}

.thumb {
  display: block;
  height: 8px;
  margin: 0 1px;
  border: 1px solid #9db6ea;
  border-radius: 2px;
  background: #c6d6fb;
}

/* page controls */
.pagebar {
  flex: none;
  height: 26px;
  display: grid;
  grid-template-columns: 1fr auto 1fr;
  align-items: center;
  border-top: 1px solid #fff;
  border-bottom: 1px solid #9d9a8c;
}

.hide { margin-left: 12px; }
.pager, .steps, .views, .layouts { display: flex; align-items: center; height: 24px; }
.steps { gap: 13px; padding: 0 14px 0 12px; border-left: 1px solid #aca899; }

.steps input {
  width: 116px;
  height: 21px;
  padding: 0 0 0 7px;
  border: 1px solid #7f9db9;
  white-space: pre;
}

.views { gap: 16px; padding: 0 12px; border: solid #aca899; border-width: 0 1px; }
.layouts { justify-content: flex-end; gap: 16px; padding-right: 11px; }
.layouts .on { height: 22px; margin-right: -8px; }

/* status bar */
.statusbar {
  flex: none;
  height: 22px;
  display: flex;
  align-items: center;
  padding-left: 2px;
}

.done { flex: 1; }
.cell { width: 24px; height: 16px; border-left: 1px solid #c2bfb0; }

.zone, .lock {
  display: flex;
  align-items: center;
  height: 16px;
  border-left: 1px solid #c2bfb0;
}

.zone { width: 154px; gap: 4px; padding-left: 4px; }
.lock { width: 43px; gap: 8px; padding-left: 9px; border-right: 1px solid #c2bfb0; }

.grip {
  width: 12px;
  height: 12px;
  margin-left: 88px;
  background: radial-gradient(circle at 1px 1px, #a5a294 1px, transparent 2px) 0 0 / 4px 4px;
  clip-path: polygon(100% 0, 100% 100%, 0 100%);
}

/* taskbar */
.taskbar {
  flex: none;
  height: 30px;
  display: flex;
  align-items: center;
  color: #fff;
  background: linear-gradient(#4a8ff5, #245edb 4px, #2860e0 80%, #1c46b0);
}

.start {
  width: 97px;
  height: 30px;
  gap: 3px;
  padding: 0 8px;
  border-radius: 0 8px 8px 0;
  background: linear-gradient(#7ac07a, #3c9a3c 5px, #379237 75%, #276f27);
  box-shadow: inset -3px 0 4px #1f6a1f;
  font: italic bold 17px/20px "Open Sans", "DejaVu Sans", sans-serif;
  text-shadow: 1px 1px 2px #143c14;
}

.start svg { width: 22px; height: 22px; }

.quick {
  width: 102px;
  display: flex;
  gap: 7px;
  padding-left: 12px;
}

.chev { align-self: flex-start; margin-left: 5px; color: #b5d0fa; font-size: 13px; line-height: 8px; }

.tasks {
  flex: 0 1 798px;
  display: flex;
  gap: 2px;
}

.tasks button {
  flex: 1;
  min-width: 0;
  height: 24px;
  gap: 4px;
  padding: 0 8px;
  border: 1px solid #2a62d8;
  border-radius: 3px;
  background: linear-gradient(#6aa3fa, #3b7cf0 4px, #3c7ff2);
  overflow: hidden;
}

.tasks .current { gap: 3px; background: #1e50b8; border-color: #173f98; }

.ask {
  width: 13px;
  height: 14px;
  margin-left: auto;
  margin-right: 19px;
  justify-content: center;
  background: #fff;
  border: 1px solid #000;
  color: #000;
  font-weight: bold;
}

.tray {
  width: 165px;
  height: 30px;
  display: flex;
  align-items: center;
  gap: 2px;
  padding-left: 10px;
  border-left: 1px solid #0a3ea8;
  background: linear-gradient(#3fb2f2, #1290e8 4px, #1192ea 80%, #0d70c0);
}

.tray time { margin-left: 8px; }
```
